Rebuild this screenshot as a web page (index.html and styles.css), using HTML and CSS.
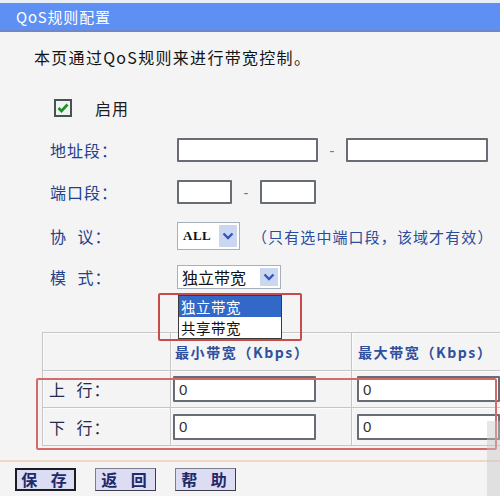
FILE: index.html
```html
<!DOCTYPE html>
<html lang="zh-CN">
<head>
<meta charset="utf-8">
<link rel="stylesheet" href="styles.css">
</head>
<body>
<div class="page">
  <div class="titlebar">QoS规则配置</div>
  <div class="intro">本页通过QoS规则来进行带宽控制。</div>

  <div class="enable">
    <svg class="cb" width="18" height="18" viewBox="0 0 18 18">
      <rect x="1" y="1" width="16" height="16" fill="#eef4ee" stroke="#4a4f58" stroke-width="2"/>
      <path d="M4.5 9 L7.5 12 L13.5 5.5" fill="none" stroke="#1f8f2a" stroke-width="2.6"/>
    </svg>
    <span class="enable-label">启用</span>
  </div>

  <div class="row row-addr">
    <span class="label">地址段：</span>
    <input class="in w141" type="text">
    <span class="dash dash-addr">-</span>
    <input class="in w142" type="text">
  </div>

  <div class="row row-port">
    <span class="label">端口段：</span>
    <input class="in w55" type="text">
    <span class="dash dash-port">-</span>
    <input class="in w56" type="text">
  </div>

  <div class="row row-proto">
    <span class="label spaced">协 议：</span>
    <div class="select sel-all">
      <span class="val val-all">ALL</span>
      <span class="arrow"><svg width="12" height="8" viewBox="0 0 12 8"><path d="M1.5 1.5 L6 6 L10.5 1.5" fill="none" stroke="#3456b8" stroke-width="2.4"/></svg></span>
    </div>
    <span class="hint">（只有选中端口段，该域才有效）</span>
  </div>

  <div class="row row-mode">
    <span class="label spaced">模 式：</span>
    <div class="select sel-mode">
      <span class="val">独立带宽</span>
      <span class="arrow"><svg width="12" height="8" viewBox="0 0 12 8"><path d="M1.5 1.5 L6 6 L10.5 1.5" fill="none" stroke="#3456b8" stroke-width="2.4"/></svg></span>
    </div>
  </div>

  <div class="bw-table">
    <div class="cell"></div>
    <div class="cell head">最小带宽（Kbps）</div>
    <div class="cell head head3">最大带宽（Kbps）</div>

    <div class="cell rlabel">上 行：</div>
    <div class="cell c2"><input class="in tin" type="text" value="0"></div>
    <div class="cell c3"><input class="in tin" type="text" value="0"></div>

    <div class="cell rlabel">下 行：</div>
    <div class="cell c2"><input class="in tin" type="text" value="0"></div>
    <div class="cell c3"><input class="in tin" type="text" value="0"></div>
  </div>

  <div class="sep"></div>

  <div class="buttons">
    <span class="btn btn-focus">保 存</span>
    <span class="btn">返 回</span>
    <span class="btn">帮 助</span>
  </div>

  <div class="dropdown">
    <div class="opt opt-sel">独立带宽</div>
    <div class="opt">共享带宽</div>
  </div>
  <div class="mark mark-drop"></div>
  <div class="mark mark-table"></div>
  <div class="scroll-shade"></div>
</div>
</body>
</html>
```

FILE: styles.css
```css
html, body {
  margin: 0;
  padding: 0;
}
body {
  background: #f4f4f4;
  font-family: "Noto Sans CJK SC", "Noto Sans", sans-serif;
  color: #111;
}
.page {
  position: relative;
  width: 500px;
  height: 496px;
  overflow: hidden;
  background: #f4f4f4;
  border-top: 3px solid #e9eff7;
  box-sizing: border-box;
}
.titlebar {
  height: 29px;
  box-sizing: border-box;
  background: #5e8ff3;
  border-bottom: 2px solid #6f86c8;
  color: #fff;
  font-size: 15px;
  line-height: 27px;
  padding-left: 16px;
  letter-spacing: 0.8px;
}
.intro {
  margin: 15px 0 0 34px;
  font-size: 16px;
  line-height: 20px;
  color: #151515;
  letter-spacing: 1.3px;
}
.enable {
  margin: 31px 0 0 54px;
  height: 20px;
  display: flex;
  align-items: center;
}
.cb { display: block; }
.enable-label {
  margin-left: 23px;
  font-size: 16px;
  line-height: 20px;
  color: #1c1c1c;
  letter-spacing: 1px;
}
.row {
  display: flex;
  align-items: center;
  padding-left: 50px;
}
.label {
  width: 127px;
  flex: none;
  font-size: 16px;
  color: #22408c;
  letter-spacing: 1px;
}
.label.spaced {
  word-spacing: 6px;
}
.row-addr { margin-top: 20px; height: 24px; }
.row-port { margin-top: 18px; height: 24px; }
.row-proto { margin-top: 18px; height: 28px; }
.row-mode { margin-top: 15px; height: 24px; }

.in {
  box-sizing: border-box;
  height: 24px;
  margin: 0;
  padding: 0 4px;
  border: 2px solid #686c74;
  border-radius: 1px;
  background: #fff;
  font-family: "Liberation Sans", sans-serif;
  font-size: 15px;
  color: #333;
  outline: none;
}
.w141 { width: 141px; }
.w142 { width: 142px; }
.w55 { width: 55px; }
.w56 { width: 56px; }
.dash {
  color: #777;
  font-size: 15px;
  text-align: center;
  font-family: "Liberation Sans", sans-serif;
}
.dash-addr { width: 28px; }
.dash-port { width: 28px; }

.select {
  display: flex;
  align-items: stretch;
  box-sizing: border-box;
  border: 1px solid #a8afbd;
  background: #fff;
  height: 100%;
}
.sel-all { width: 63px; }
.sel-mode { width: 104px; }
.val {
  flex: 1;
  font-size: 16px;
  line-height: 22px;
  padding-left: 4px;
  color: #111;
}
.val-all {
  font-family: "Liberation Serif", serif;
  font-weight: bold;
  font-size: 13px;
  line-height: 26px;
  padding-left: 5px;
  letter-spacing: 0.5px;
}
.arrow {
  width: 18px;
  margin: 2px 2px 2px 0;
  background: #cbd6f0;
  display: flex;
  align-items: center;
  justify-content: center;
}
.hint {
  margin-left: 12px;
  font-size: 15px;
  color: #2a4b9e;
  letter-spacing: 1.1px;
}

.bw-table {
  margin: 43px 0 0 42px;
  display: grid;
  grid-template-columns: 128px 181px 170px;
  grid-template-rows: 38px 37px 38px;
  border-top: 1px solid #c6c6c6;
  border-left: 1px solid #c6c6c6;
  width: 480px;
}
.cell {
  border-right: 1px solid #c6c6c6;
  border-bottom: 1px solid #c6c6c6;
  box-shadow: inset 1px 1px 0 #fbfbfb;
  display: flex;
  align-items: center;
}
.head {
  padding-left: 4px;
  font-size: 14px;
  font-weight: bold;
  color: #2f4f9f;
  letter-spacing: 1.6px;
}
.head3 { padding-left: 6px; }
.rlabel {
  padding-left: 6px;
  font-size: 16px;
  color: #232a4e;
  letter-spacing: 1px;
  word-spacing: 6px;
}
.c2 { padding-left: 2px; }
.c3 { padding-left: 5px; }
.tin {
  width: 143px;
  height: 26px;
}

.sep {
  margin-top: 14px;
  height: 2px;
  background: #f0d7c0;
}
.buttons {
  margin: 6px 0 0 15px;
  display: flex;
  gap: 19px;
}
.btn {
  box-sizing: border-box;
  width: 61px;
  height: 23px;
  background: #dcdcf3;
  border: 1px solid #7d7d90;
  border-right-color: #3c3c4a;
  border-bottom-color: #3c3c4a;
  font-size: 16px;
  line-height: 21px;
  text-align: center;
  color: #1e2a6a;
  font-weight: bold;
  letter-spacing: 3px;
  word-spacing: 4px;
}
.btn-focus {
  border: 2px solid #1c1c24;
  line-height: 19px;
}

.dropdown {
  position: absolute;
  left: 178px;
  top: 292px;
  width: 104px;
  background: #fff;
  border: 1px solid #3a3a3a;
  box-sizing: border-box;
}
.opt {
  height: 21px;
  font-size: 14.5px;
  line-height: 21px;
  padding-left: 2px;
  color: #111;
  letter-spacing: 0.5px;
}
.opt-sel {
  background: #3268c8;
  color: #fff;
}
.mark {
  position: absolute;
  box-sizing: border-box;
  border: 2px solid #c84b4b;
  border-radius: 2px;
}
.mark-drop {
  left: 158px;
  top: 290px;
  width: 144px;
  height: 48px;
}
.mark-table {
  left: 36px;
  top: 375px;
  width: 461px;
  height: 72px;
  border-color: #d66a6a;
}
.scroll-shade {
  position: absolute;
  right: 0;
  top: 418px;
  width: 13px;
  bottom: 0;
  background: rgba(200, 200, 200, 0.45);
}
```
